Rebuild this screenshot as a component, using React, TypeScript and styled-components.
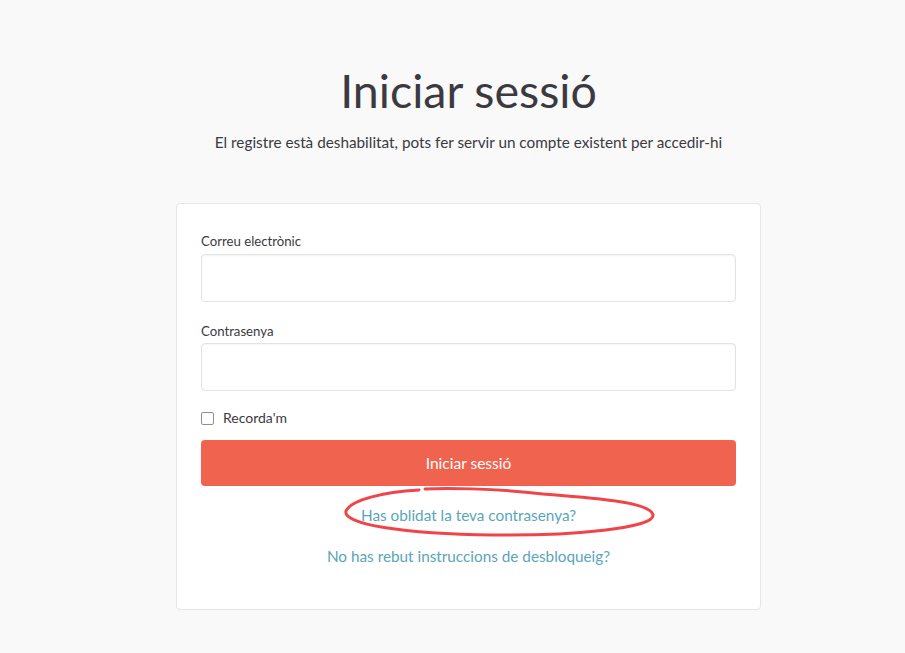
import styled, { createGlobalStyle } from 'styled-components';

const GlobalStyle = createGlobalStyle`
   html, body {
      margin: 0;
      padding: 0;
      background-color: #f9f9f9;
      font-family: Lato, 'Noto Sans', sans-serif;
      color: #3b3a40;
   }
   * {
      box-sizing: border-box;
   }
`;

const Page = styled.div`
   min-height: 653px;
   display: flex;
   flex-direction: column;
   align-items: center;
   padding-top: 60px;
   padding-left: 32px;
`;

const Title = styled.h1`
   margin: 0;
   font-weight: 400;
   font-size: 46.5px;
   line-height: 60px;
   color: #3b3a40;
`;

const Subtitle = styled.p`
   margin: 12px 0 0;
   font-size: 15.3px;
   line-height: 20px;
   color: #3b3a40;
`;

const Card = styled.div`
   position: relative;
   margin-top: 51px;
   width: 585px;
   background: #fff;
   border: 1px solid #e6e6e6;
   border-radius: 4px;
   padding: 28px 24px 43px;
`;

const Field = styled.div`
   display: flex;
   flex-direction: column;
   gap: 4px;
   margin-bottom: 20px;

   & + & {
      gap: 3px;
      margin-bottom: 18px;
   }
`;

const Label = styled.label`
   font-size: 13.2px;
   line-height: 18px;
   color: #3b3a40;
`;

const Input = styled.input`
   height: 48px;
   width: 100%;
   border: 1px solid #e3e3e3;
   border-radius: 4px;
   box-shadow: inset 0 1px 2px rgba(0, 0, 0, 0.05);
   background: #fff;
   outline: none;
`;

const CheckRow = styled.label`
   display: flex;
   align-items: center;
   gap: 9px;
   font-size: 14px;
   line-height: 18px;
   color: #3b3a40;
`;

const Check = styled.span`
   width: 13px;
   height: 13px;
   border: 1px solid #8f8f8f;
   border-radius: 2px;
   background: #fff;
`;

const SubmitButton = styled.button`
   margin-top: 13px;
   width: 100%;
   height: 46px;
   border: none;
   border-radius: 4px;
   background: #f0634f;
   color: #fff;
   font-family: inherit;
   font-size: 15.5px;
`;

const Links = styled.div`
   display: flex;
   flex-direction: column;
   align-items: center;
   gap: 21px;
   margin-top: 19px;
`;

const LinkText = styled.a`
   font-size: 15.3px;
   line-height: 20px;
   color: #5aa5bb;
   text-decoration: none;
`;

const Scribble = styled.svg`
   position: absolute;
   left: 166px;
   top: 282px;
   pointer-events: none;
`;

export default function App() {
   return (
      <>
         <GlobalStyle />
         <Page>
            <Title>Iniciar sessió</Title>
            <Subtitle>El registre està deshabilitat, pots fer servir un compte existent per accedir-hi</Subtitle>
            <Card>
               <Field>
                  <Label>Correu electrònic</Label>
                  <Input type="email" />
               </Field>
               <Field>
                  <Label>Contrasenya</Label>
                  <Input type="password" />
               </Field>
               <CheckRow>
                  <Check />
                  Recorda'm
               </CheckRow>
               <SubmitButton>Iniciar sessió</SubmitButton>
               <Links>
                  <LinkText href="#">Has oblidat la teva contrasenya?</LinkText>
                  <LinkText href="#">No has rebut instruccions de desbloqueig?</LinkText>
               </Links>
               <Scribble width="314" height="54" viewBox="0 0 314 54">
                  <path
                     d="M76 4 C 40 6, 8 14, 3 25 C -1 38, 60 48, 150 49 C 230 50, 312 42, 310 29 C 308 16, 250 12, 200 8 C 150 2, 100 2, 82 3"
                     fill="none"
                     stroke="#f0444a"
                     strokeWidth="3"
                     strokeLinecap="round"
                  />
               </Scribble>
            </Card>
         </Page>
      </>
   );
}
